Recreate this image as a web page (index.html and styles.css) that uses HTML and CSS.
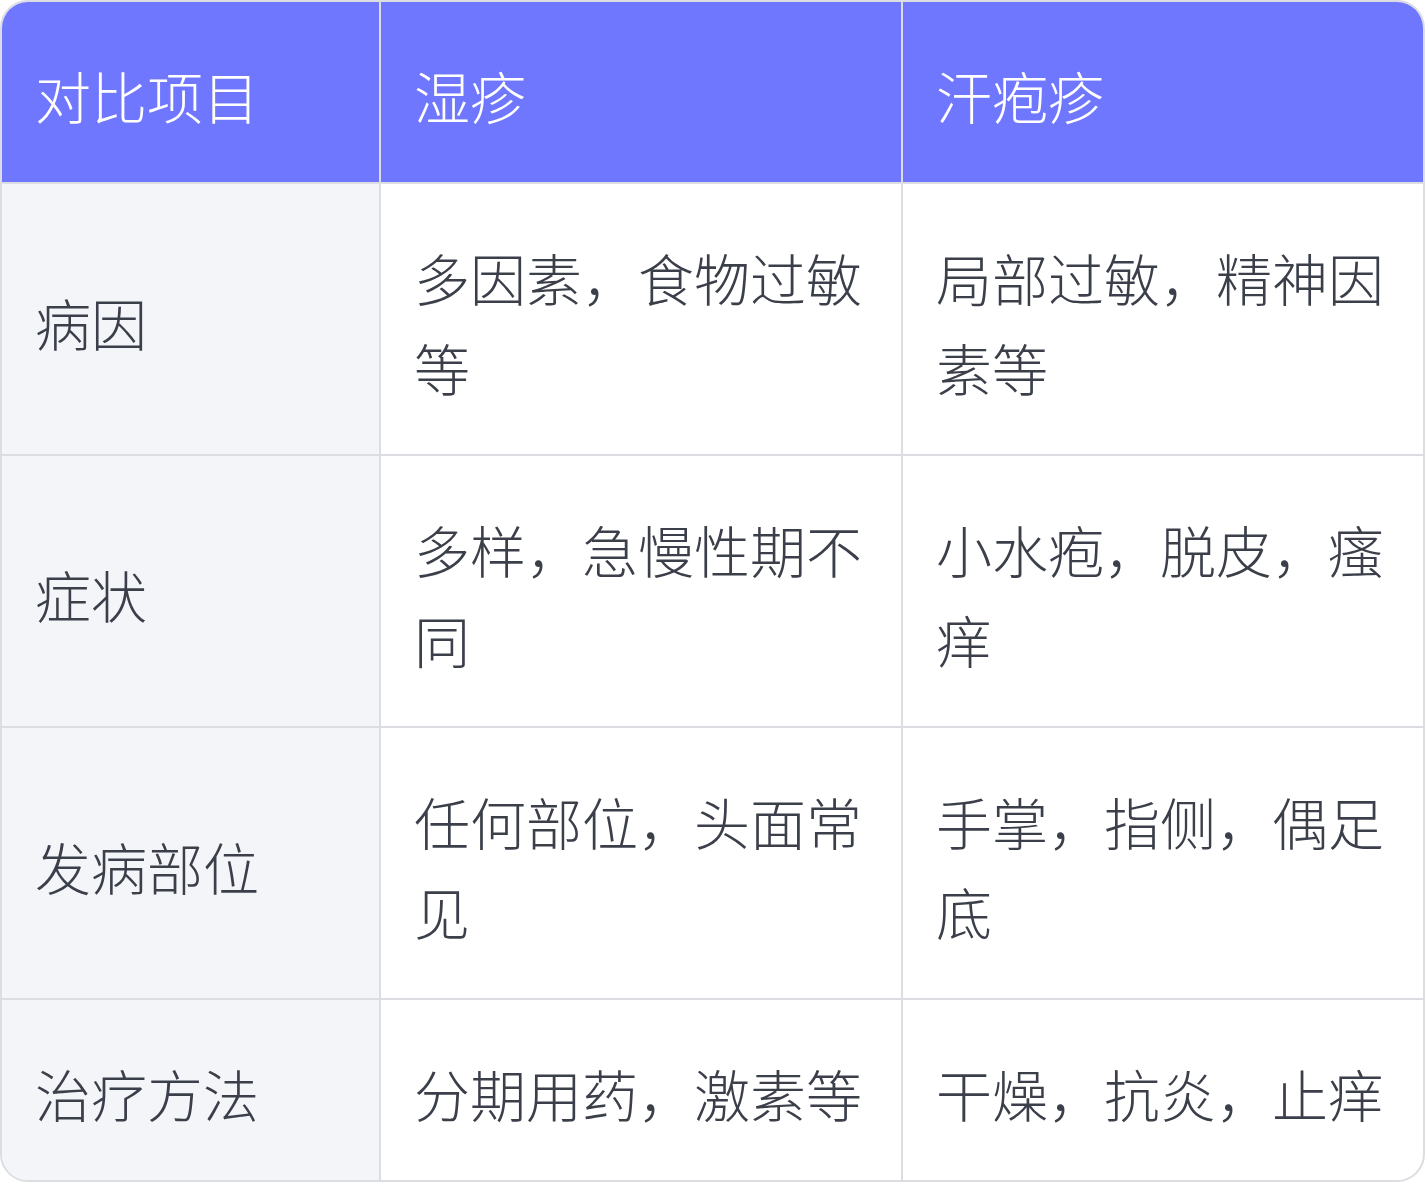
FILE: index.html
```html
<!DOCTYPE html>
<html lang="zh-CN">
<head>
<meta charset="utf-8">
<title>湿疹与汗疱疹对比</title>
<link rel="stylesheet" href="styles.css">
</head>
<body>
<div class="card">
  <table class="cmp">
    <colgroup>
      <col class="c1">
      <col class="c2">
      <col class="c3">
    </colgroup>
    <thead>
      <tr><th>对比项目</th><th>湿疹</th><th>汗疱疹</th></tr>
    </thead>
    <tbody>
      <tr><td class="key">病因</td><td>多因素，食物过敏等</td><td>局部过敏，精神因素等</td></tr>
      <tr><td class="key">症状</td><td>多样，急慢性期不同</td><td>小水疱，脱皮，瘙痒</td></tr>
      <tr><td class="key">发病部位</td><td>任何部位，头面常见</td><td>手掌，指侧，偶足底</td></tr>
      <tr><td class="key">治疗方法</td><td>分期用药，激素等</td><td>干燥，抗炎，止痒</td></tr>
    </tbody>
  </table>
</div>
</body>
</html>
```

FILE: styles.css
```css
html, body {
  margin: 0;
  padding: 0;
  background: #ffffff;
}
.card {
  width: 1425px;
  box-sizing: border-box;
  border: 2px solid #dcdde2;
  border-radius: 28px;
  overflow: hidden;
  background: #ffffff;
}
.cmp {
  width: 100%;
  border-collapse: collapse;
  table-layout: fixed;
  font-family: "Noto Sans CJK SC", "Noto Sans", sans-serif;
  font-weight: 300;
  font-size: 56px;
  line-height: 90px;
  color: #3b3f4a;
}
.c1 { width: 378px; }
.c2 { width: 522px; }
.c3 { width: auto; }
.cmp th, .cmp td {
  padding: 48px 32px 42px 33px;
  text-align: left;
  vertical-align: middle;
  border: 2px solid #dcdde2;
  font-weight: 300;
}
.cmp tr > :first-child { border-left: none; }
.cmp tr > :last-child { border-right: none; }
.cmp thead tr:first-child > * { border-top: none; }
.cmp tbody tr:last-child > * { border-bottom: none; }
.cmp th {
  background: #7077ff;
  color: #ffffff;
}
.cmp td.key {
  background: #f4f5f9;
}
```
